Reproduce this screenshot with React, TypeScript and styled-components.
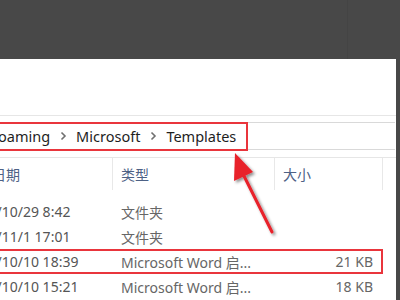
import styled, { createGlobalStyle } from "styled-components";

const GlobalStyle = createGlobalStyle`
  html, body {
    margin: 0;
    padding: 0;
    background: #484848;
    overflow: hidden;
  }
  body {
    font-family: "Noto Sans", "Noto Sans CJK SC", sans-serif;
  }
`;

const Screen = styled.div`
  position: relative;
  width: 400px;
  height: 300px;
  display: flex;
  flex-direction: column;
  background: #484848;
  overflow: hidden;
`;

const Backdrop = styled.div`
  height: 59px;
  flex-shrink: 0;
  .seam {
    width: 347px;
    height: 100%;
    border-right: 1px solid #444444;
  }
`;

const Window = styled.div`
  width: 396px;
  flex: 1;
  background: #ffffff;
  display: flex;
  flex-direction: column;
  overflow: hidden;
`;

const Ribbon = styled.div`
  height: 56px;
  flex-shrink: 0;
  border-bottom: 1px solid #e6e6e6;
`;

const AddressRow = styled.div`
  padding: 6px 1px 7px 0;
  border-bottom: 1px solid #e6e6e6;
`;

const AddressBar = styled.div`
  position: relative;
  height: 26px;
  border-top: 1px solid #d9d9d9;
  border-bottom: 1px solid #d9d9d9;
  display: flex;
  align-items: center;
  font-size: 14.5px;
  color: #1e1e1e;
`;

const Crumb = styled.span<{ shift?: number }>`
  white-space: nowrap;
  margin-left: ${({ shift }) => shift || 0}px;
`;

const Chevron = styled.svg`
  width: 26px;
  height: 10px;
  flex-shrink: 0;
`;

const Mark = styled.div<{ w: number; h: number; x: number; y: number }>`
  position: absolute;
  left: ${({ x }) => x}px;
  top: ${({ y }) => y}px;
  width: ${({ w }) => w}px;
  height: ${({ h }) => h}px;
  border: 2px solid #e9353c;
  box-sizing: border-box;
  pointer-events: none;
`;

const HeaderRow = styled.div`
  display: grid;
  grid-template-columns: 113px 162px 108px 1fr;
  height: 32px;
  margin-bottom: 9px;
`;

const HeaderCell = styled.div<{ shift?: number }>`
  display: flex;
  align-items: center;
  padding-left: 8px;
  font-size: 14px;
  color: #4d6185;
  border-right: 1px solid #e8e8e8;
  white-space: nowrap;
  overflow: hidden;
  span {
    margin-left: ${({ shift }) => shift || 0}px;
  }
`;

const FileRow = styled.div`
  position: relative;
  display: grid;
  grid-template-columns: 113px 162px 98px;
  height: 25px;
  align-items: center;
  font-size: 14px;
  color: #555;
`;

const DateCell = styled.div`
  white-space: nowrap;
  overflow: hidden;
  span {
    margin-left: -35.5px;
  }
`;

const TypeCell = styled.div`
  padding-left: 8px;
  white-space: nowrap;
  color: #666;
`;

const SizeCell = styled.div`
  text-align: right;
  color: #666;
`;

const Arrow = styled.svg`
  position: absolute;
  left: 0;
  top: 0;
  pointer-events: none;
`;

const rows = [
  { date: "2017/10/29 8:42", type: "文件夹", size: "" },
  { date: "2017/11/1 17:01", type: "文件夹", size: "" },
  { date: "2017/10/10 18:39", type: "Microsoft Word 启...", size: "21 KB", marked: true },
  { date: "2017/10/10 15:21", type: "Microsoft Word 启...", size: "18 KB" },
];

const Sep = () => (
  <Chevron viewBox="0 0 26 10">
    <polyline points="11.5,1.5 15,5 11.5,8.5" fill="none" stroke="#707070" strokeWidth="1.6" />
  </Chevron>
);

const App = () => {
  return (
    <Screen>
      <GlobalStyle />
      <Backdrop>
        <div className="seam" />
      </Backdrop>
      <Window>
        <Ribbon />
        <AddressRow>
          <AddressBar>
            <Crumb shift={-11}>Roaming</Crumb>
            <Sep />
            <Crumb>Microsoft</Crumb>
            <Sep />
            <Crumb>Templates</Crumb>
            <Mark x={-4} y={-1} w={252} h={29} />
          </AddressBar>
        </AddressRow>
        <HeaderRow>
          <HeaderCell shift={-44}>
            <span>修改日期</span>
          </HeaderCell>
          <HeaderCell>类型</HeaderCell>
          <HeaderCell>大小</HeaderCell>
          <div />
        </HeaderRow>
        {rows.map((r) => (
          <FileRow key={r.date}>
            <DateCell>
              <span>{r.date}</span>
            </DateCell>
            <TypeCell>{r.type}</TypeCell>
            <SizeCell>{r.size}</SizeCell>
            {r.marked && <Mark x={-4} y={0} w={387} h={25} />}
          </FileRow>
        ))}
      </Window>
      <Arrow width="400" height="300" viewBox="0 0 400 300">
        <defs>
          <filter id="sh" x="-50%" y="-50%" width="200%" height="200%">
            <feDropShadow dx="2" dy="2" stdDeviation="1.5" floodColor="#000" floodOpacity="0.45" />
          </filter>
        </defs>
        <g filter="url(#sh)">
          <line x1="272" y1="232" x2="244" y2="176" stroke="#e8212a" strokeWidth="3" strokeLinecap="round" />
          <polygon points="235,153 253,172 234,181" fill="#e8212a" />
        </g>
      </Arrow>
    </Screen>
  );
};

export default App;
